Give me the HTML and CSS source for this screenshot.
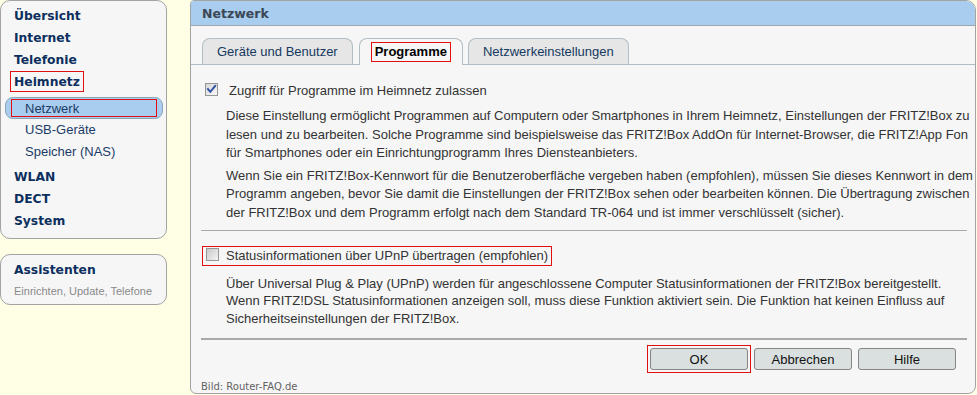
FILE: index.html
```html
<!DOCTYPE html>
<html lang="de">
<head>
<meta charset="utf-8">
<title>Netzwerk</title>
<link rel="stylesheet" href="styles.css">
</head>
<body>
<div class="page">
  <aside class="sidebar">
    <nav class="navbox">
      <div class="nav-main">Übersicht</div>
      <div class="nav-main">Internet</div>
      <div class="nav-main">Telefonie</div>
      <div class="nav-main"><span class="mark-main">Heimnetz</span></div>
      <div class="nav-pill"><span class="mark-sub">Netzwerk</span></div>
      <div class="nav-sub">USB-Geräte</div>
      <div class="nav-sub">Speicher (NAS)</div>
      <div class="nav-main nav-gap">WLAN</div>
      <div class="nav-main">DECT</div>
      <div class="nav-main">System</div>
    </nav>
    <div class="assistbox">
      <div class="nav-main">Assistenten</div>
      <div class="assist-sub">Einrichten, Update, Telefone</div>
    </div>
  </aside>

  <main class="panel">
    <div class="panel-title">Netzwerk</div>
    <div class="tabs">
      <div class="tab"><span class="tab-label">Geräte und Benutzer</span></div>
      <div class="tab tab-active"><span class="tab-label tab-mark">Programme</span></div>
      <div class="tab tab-last"><span class="tab-label">Netzwerkeinstellungen</span></div>
    </div>

    <div class="content">
      <div class="check-row">
        <span class="cbox cbox-checked"><svg width="11" height="11" viewBox="0 0 11 11"><path d="M2 5.2 L4.3 7.8 L9.2 1.8" fill="none" stroke="#3153a6" stroke-width="2" stroke-linecap="square" stroke-linejoin="miter"/></svg></span>
        <span class="check-label">Zugriff für Programme im Heimnetz zulassen</span>
      </div>
      <p class="desc desc-first">Diese Einstellung ermöglicht Programmen auf Computern oder Smartphones in Ihrem Heimnetz, Einstellungen der FRITZ!Box zu<br>lesen und zu bearbeiten. Solche Programme sind beispielsweise das FRITZ!Box AddOn für Internet-Browser, die FRITZ!App Fon<br>für Smartphones oder ein Einrichtungprogramm Ihres Diensteanbieters.</p>
      <p class="desc desc-second">Wenn Sie ein FRITZ!Box-Kennwort für die Benutzeroberfläche vergeben haben (empfohlen), müssen Sie dieses Kennwort in dem<br>Programm angeben, bevor Sie damit die Einstellungen der FRITZ!Box sehen oder bearbeiten können. Die Übertragung zwischen<br>der FRITZ!Box und dem Programm erfolgt nach dem Standard TR-064 und ist immer verschlüsselt (sicher).</p>

      <div class="sep"></div>

      <div class="check-row check-marked">
        <span class="cbox cbox-empty"></span>
        <span class="check-label">Statusinformationen über UPnP übertragen (empfohlen)</span>
      </div>
      <p class="desc desc-third">Über Universal Plug &amp; Play (UPnP) werden für angeschlossene Computer Statusinformationen der FRITZ!Box bereitgestellt.<br>Wenn FRITZ!DSL Statusinformationen anzeigen soll, muss diese Funktion aktiviert sein. Die Funktion hat keinen Einfluss auf<br>Sicherheitseinstellungen der FRITZ!Box.</p>

      <div class="sep sep-thick"></div>

      <div class="buttons">
        <span class="btn-mark"><button class="btn" type="button">OK</button></span>
        <button class="btn" type="button">Abbrechen</button>
        <button class="btn" type="button">Hilfe</button>
      </div>
    </div>

    <div class="credit">Bild: Router-FAQ.de</div>
  </main>
</div>
</body>
</html>
```
FILE: styles.css
```css
* { box-sizing: border-box; }

html, body {
  margin: 0;
  padding: 0;
  background: #ffffe6;
}

body {
  font-family: "Liberation Sans", Arial, sans-serif;
  font-size: 13px;
  color: #333;
}

.page {
  display: flex;
  align-items: flex-start;
}

/* ---------- sidebar ---------- */
.sidebar {
  width: 167px;
  margin-right: 23px;
  display: flex;
  flex-direction: column;
}

.navbox {
  height: 239px;
  border: 1px solid #a3a3a3;
  border-radius: 10px;
  background: #f6f6f6;
  padding: 4px 3px 6px 4px;
}

.nav-main {
  height: 22px;
  line-height: 22px;
  padding-left: 9px;
  font-family: "DejaVu Sans", Verdana, sans-serif;
  font-weight: bold;
  font-size: 12.3px;
  color: #0c2f5e;
  white-space: nowrap;
}

.mark-main {
  display: inline-block;
  vertical-align: top;
  line-height: 18px;
  padding: 1px 3px 0 3px;
  margin-left: -4px;
  border: 1px solid #e01010;
}

.nav-pill {
  height: 22px;
  margin-top: 4px;
  border: 1px solid #8ea3b4;
  border-radius: 8px;
  background: #a8cdee;
  padding: 1px 5px;
}

.mark-sub {
  display: block;
  height: 18px;
  line-height: 17px;
  border: 1px solid #e01010;
  padding-left: 13px;
  color: #1b3c68;
}

.nav-sub {
  height: 22px;
  line-height: 22px;
  padding-left: 20px;
  color: #1b3c68;
}

.nav-gap { margin-top: 3px; }

.assistbox {
  margin-top: 15px;
  border: 1px solid #a3a3a3;
  border-radius: 10px;
  background: #f6f6f6;
  padding: 4px 3px 3px 4px;
}

.assist-sub {
  height: 20px;
  line-height: 20px;
  padding-left: 9px;
  font-size: 11px;
  color: #8a8a8a;
  white-space: nowrap;
}

/* ---------- main panel ---------- */
.panel {
  width: 786px;
  height: 394px;
  border: 1px solid #a3a3a3;
  border-radius: 4px 10px 8px 6px;
  background: #f6f6f6;
  display: flex;
  flex-direction: column;
  overflow: hidden;
}

.panel-title {
  height: 25px;
  padding: 2px 0 0 11px;
  line-height: 22px;
  background: #a8cdee;
  border-bottom: 1px solid #9aa5ae;
  font-family: "DejaVu Sans", Verdana, sans-serif;
  font-weight: bold;
  font-size: 12.5px;
  color: #3b4754;
}

.tabs {
  display: flex;
  align-items: flex-end;
  gap: 6px;
  padding: 12px 0 0 11px;
  border-bottom: 1px solid #b3bec4;
}

.tab {
  height: 26px;
  display: flex;
  align-items: center;
  padding: 0 14px;
  border: 1px solid #b3bec4;
  border-bottom: none;
  border-radius: 8px 8px 0 0;
  background: #e6e6e6;
  color: #15395f;
}

.tab-label {
  line-height: 18px;
  white-space: nowrap;
}

.tab-active {
  height: 27px;
  margin-bottom: -1px;
  padding: 0 11px;
  background: #f6f6f6;
  color: #000;
  font-weight: bold;
}

.tab-mark {
  border: 1px solid #e01010;
  padding: 0 3px;
}

.tab-last { margin-left: -1px; }

.content {
  padding: 17px 1px 0 14px;
}

.check-row {
  display: flex;
  align-items: flex-start;
  line-height: 18px;
}

.check-row .check-label { margin-left: 11px; }

.cbox {
  width: 13px;
  height: 13px;
  margin-top: 1px;
  flex: none;
  border: 1px solid #979797;
  display: flex;
  align-items: center;
  justify-content: center;
}

.cbox-checked {
  background: linear-gradient(135deg, #d6d6d6, #f8f8f8);
}

.cbox-empty {
  background: linear-gradient(135deg, #c9c9c9, #f4f4f4);
}

.check-marked {
  display: inline-flex;
  align-self: flex-start;
  margin-top: 15px;
  margin-left: -3px;
  padding: 0 3px;
  border: 1px solid #e01010;
}

.check-marked .check-label { margin-left: 7px; }

.desc {
  margin: 0 0 0 21px;
  white-space: nowrap;
}

.desc-first { margin-top: 7px; line-height: 18.5px; }
.desc-second { margin-top: 4px; line-height: 18.5px; }
.desc-third { margin-top: 8.5px; line-height: 17.5px; }

.sep {
  height: 1px;
  margin: 8px 7px 0 -4px;
  background: #a9a9a9;
}

.sep-thick {
  height: 2px;
  margin-top: 11px;
}

.buttons {
  display: flex;
  align-items: center;
  justify-content: flex-end;
  gap: 6px;
  margin: 5px 18px 0 0;
}

.btn-mark {
  display: flex;
  padding: 2px;
  margin-right: -3px;
  border: 1px solid #e01010;
}

.btn {
  width: 98px;
  height: 22px;
  padding: 0;
  border: 1px solid #858585;
  border-radius: 3px;
  background: #d9e0df;
  font-family: "Liberation Sans", Arial, sans-serif;
  font-size: 13px;
  color: #111;
}

.credit {
  margin-top: auto;
  padding-left: 10px;
  line-height: 12px;
  font-family: "DejaVu Sans", Verdana, sans-serif;
  font-size: 10px;
  color: #626262;
}
```
